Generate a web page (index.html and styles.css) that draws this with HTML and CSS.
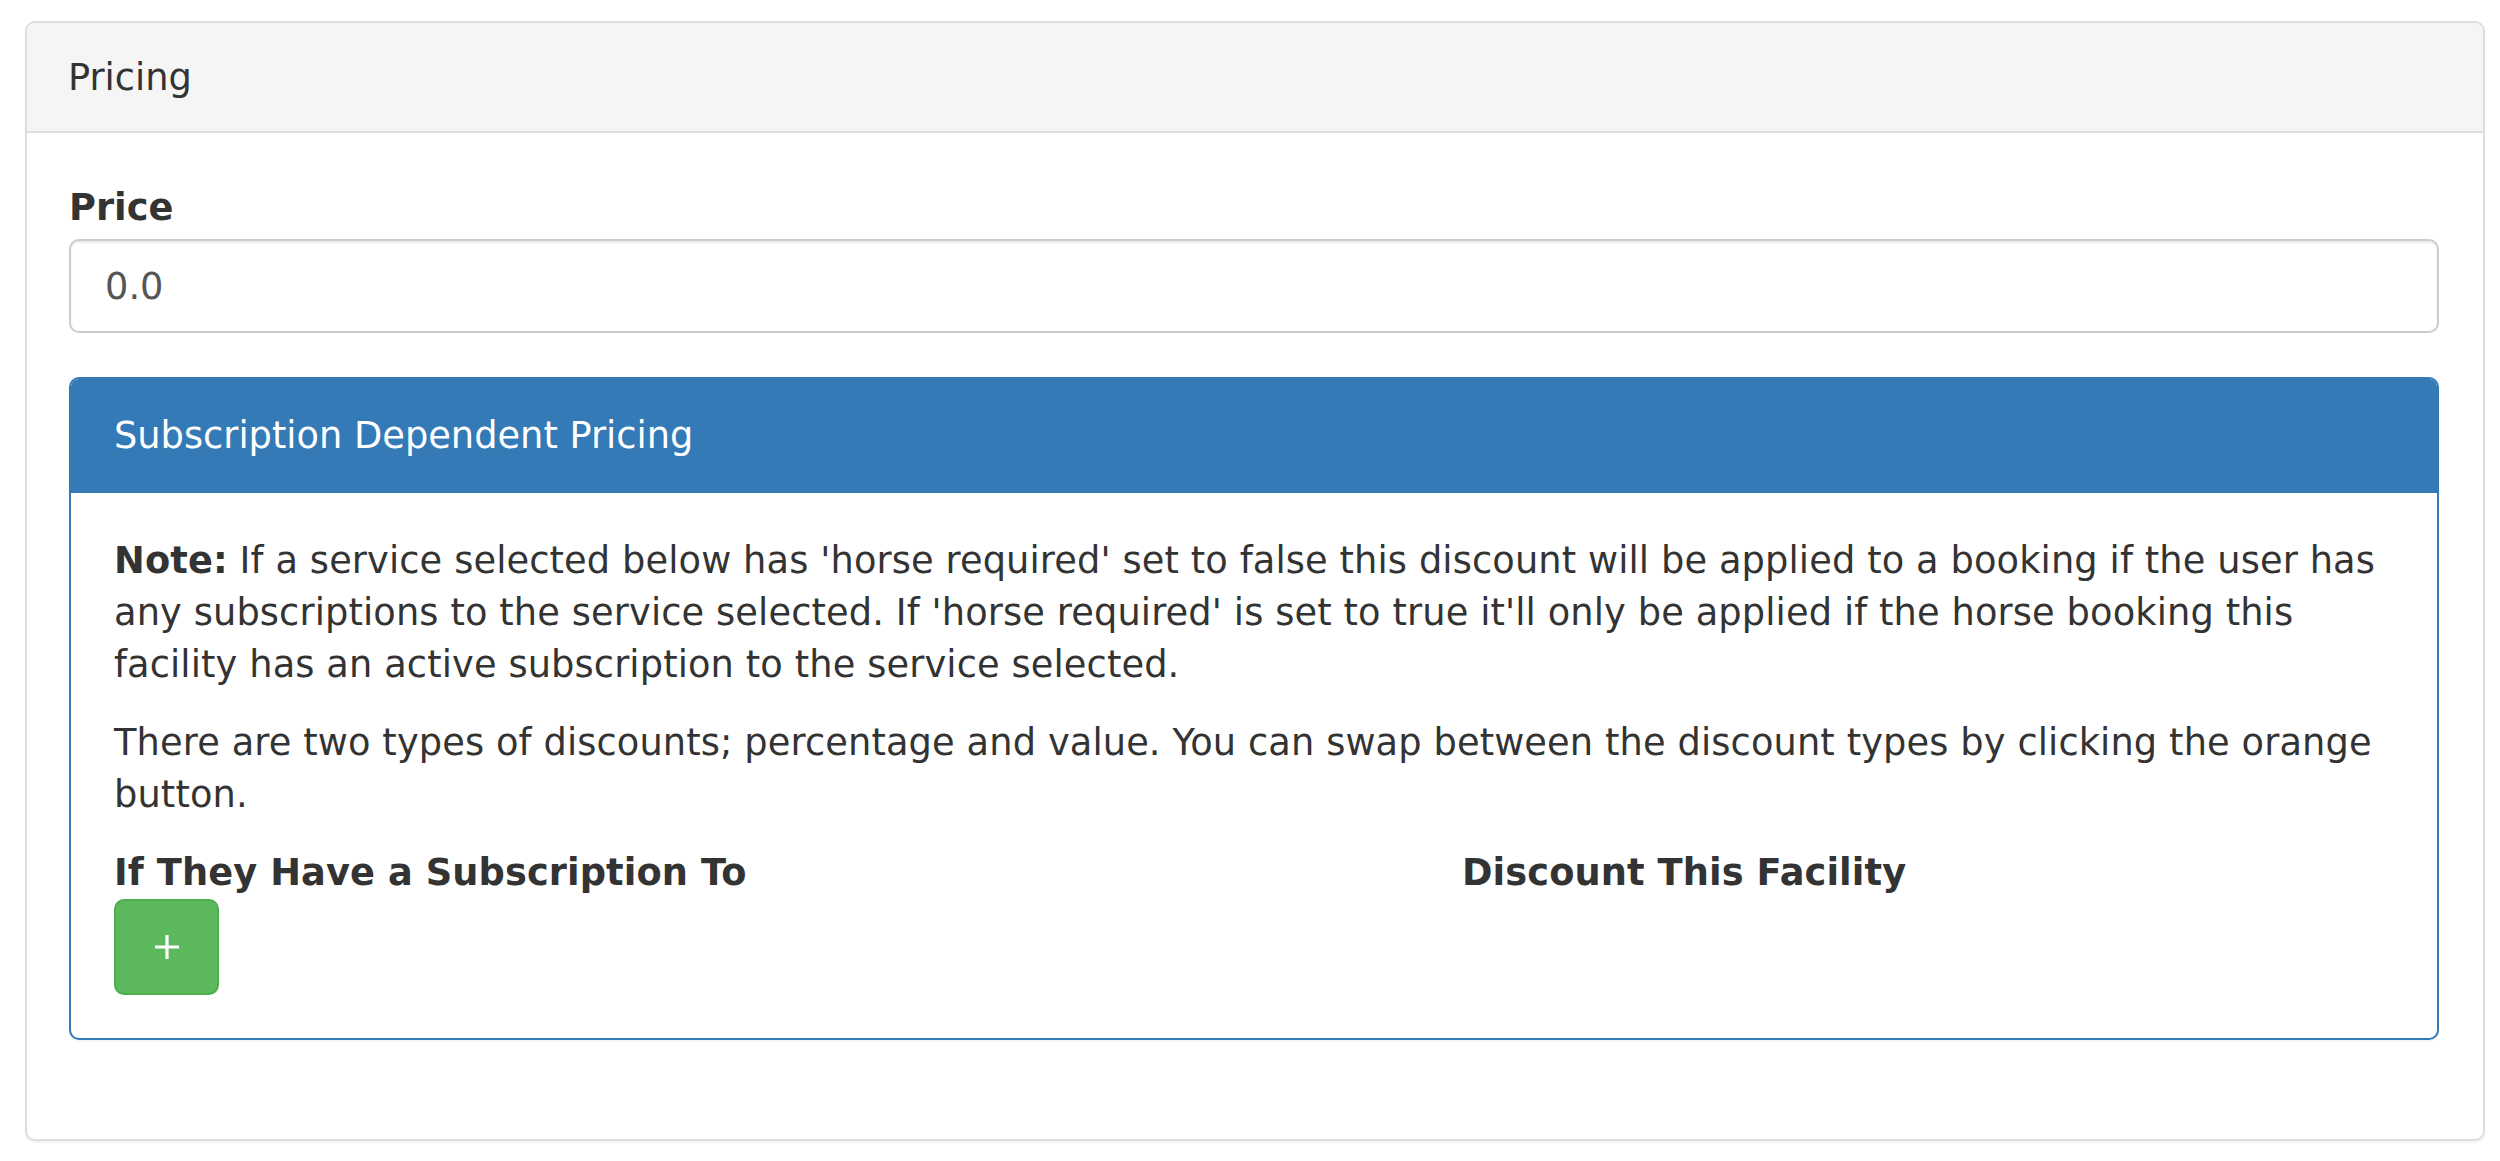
FILE: index.html
```html
<!DOCTYPE html>
<html lang="en">

<head>
    <meta charset="UTF-8">
    <meta name="viewport" content="width=device-width, initial-scale=1.0">
    <title>Pricing</title>
    <link rel="stylesheet" href="styles.css">
</head>

<body>
    <main class="page">
        <div class="panel panel-default">
            <div class="panel-heading">Pricing</div>
            <div class="panel-body">
                <div class="form-group">
                    <label class="control-label" for="price">Price</label>
                    <input class="form-control" id="price" type="text" value="0.0">
                </div>

                <div class="panel panel-primary">
                    <div class="panel-heading">Subscription Dependent Pricing</div>
                    <div class="panel-body">
                        <p><strong>Note:</strong> If a service selected below has 'horse required' set to false this discount will be applied to a booking if the user has any subscriptions to the service selected. If 'horse required' is set to true it'll only be applied if the horse booking this facility has an active subscription to the service selected.</p>
                        <p>There are two types of discounts; percentage and value. You can swap between the discount types by clicking the orange button.</p>
                        <div class="discounts">
                            <div class="discount-col">
                                <div class="col-title">If They Have a Subscription To</div>
                                <button class="btn btn-success" type="button">
                                    <svg width="26" height="26" viewBox="0 0 26 26">
                                        <path d="M13 1v24M1 13h24" stroke="#fff" stroke-width="3.2" fill="none"/>
                                    </svg>
                                </button>
                            </div>
                            <div class="discount-col">
                                <div class="col-title">Discount This Facility</div>
                            </div>
                        </div>
                    </div>
                </div>
            </div>
        </div>
    </main>
</body>

</html>
```

FILE: styles.css
```css
* {
    box-sizing: border-box;
    margin: 0;
    padding: 0;
}

body {
    background-color: #fff;
    color: #333;
    font-family: Verdana, "DejaVu Sans", sans-serif;
    font-size: 36.75px;
    line-height: 52px;
}

.page {
    padding: 21px 15px 22px 25px;
}

.panel {
    border: 2px solid #ddd;
    border-radius: 10px;
    background-color: #fff;
    box-shadow: 0 2px 2px rgba(0, 0, 0, 0.05);
}

.panel-heading {
    border-bottom: 2px solid #ddd;
    border-radius: 8px 8px 0 0;
}

.panel-default>.panel-heading {
    background-color: #f5f5f5;
    padding: 29px 41px 27px;
}

.panel-default>.panel-body {
    padding: 49px 44px 47px 42px;
}

.form-group {
    margin-bottom: 44px;
}

.control-label {
    display: block;
    font-weight: bold;
    margin-bottom: 5px;
}

.form-control {
    display: block;
    width: 100%;
    height: 94px;
    padding: 0 34px;
    border: 2px solid #ccc;
    border-radius: 10px;
    box-shadow: inset 0 2px 2px rgba(0, 0, 0, 0.075);
    color: #555;
    font-family: inherit;
    font-size: 36.75px;
    line-height: 52px;
    outline: none;
}

.panel-primary {
    border-color: #337ab7;
    margin-bottom: 52px;
}

.panel-primary>.panel-heading {
    background-color: #337ab7;
    border-bottom-color: #337ab7;
    color: #fff;
    padding: 31px 43px 29px;
}

.panel-primary>.panel-body {
    padding: 42px 43px 43px;
}

p {
    margin-bottom: 26px;
    letter-spacing: 0.12px;
}

.discounts {
    display: grid;
    grid-template-columns: 1348px 1fr;
}

.col-title {
    font-weight: bold;
    letter-spacing: 0.1px;
}

.btn {
    display: flex;
    align-items: center;
    justify-content: center;
    width: 105px;
    height: 96px;
    border: 2px solid #4cae4c;
    border-radius: 10px;
    cursor: pointer;
}

.btn-success {
    background-color: #5cb85c;
}
```
